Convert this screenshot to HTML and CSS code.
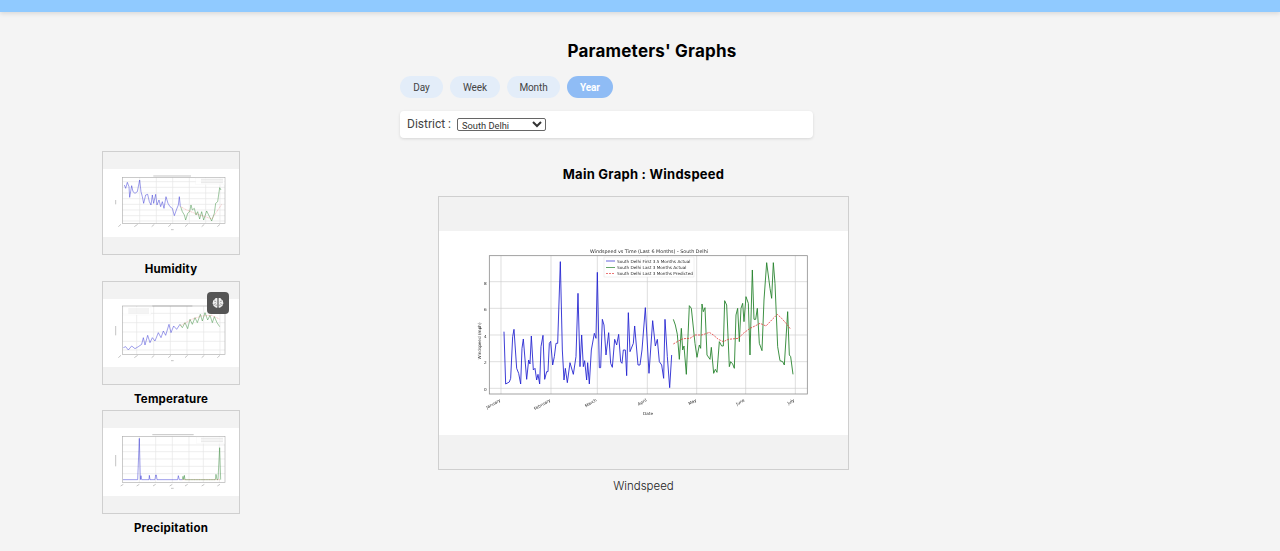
FILE: index.html
```html
<!DOCTYPE html>
<html lang="en">
<head>
<meta charset="utf-8">
<title>Parameters' Graphs</title>
<link rel="stylesheet" href="styles.css">
</head>
<body>
<header class="topbar"></header>
<div class="layout">
  <aside class="sidebar">
    <figure class="thumb">
      <div class="frame">
        <svg class="chart" width="136" height="68" viewBox="0 0 136 68">
          <rect class="paper" width="136" height="68"/>
          <g transform="translate(-8 -24) scale(.33333)">
            <path class="grid" d="M82 110H390M82 127H390M82 144H390M82 161H390M82 178H390M82 195H390M82 212H390M82 228H390M134 97V235M184 97V235M233 97V235M283 97V235M332 97V235M375 97V235"/>
            <rect class="axes" x="82" y="97" width="308" height="138"/>
            <rect class="legend" x="302" y="99" width="86" height="20"/>
            <path class="legendtxt" d="M318 103H384M318 108H384M318 113H384"/>
            <polyline class="blue thin" points="88,120 92,130 97,112 102,125 104,157 110,122 114,140 120,145 127,140 134,105 138,140 142,155 146,175 152,150 158,148 163,170 168,180 172,150 176,175 182,148 186,180 192,165 197,185 202,170 207,190 213,155 219,175 225,185 232,190 238,212 244,195 250,180 253,155 256,185"/>
            <polyline class="green thin" points="257,185 262,200 268,210 272,225 278,205 284,200 288,180 292,195 298,190 303,210 308,200 314,222 320,200 326,225 335,198 342,212 350,228 358,205 362,175 368,170 374,128 378,135"/>
            <polyline class="red thin" points="257,185 275,195 300,205 330,215 350,222 362,205 380,178"/>
            <path class="legendtxt dark" d="M175 93H288M78 238L70 245M128 238L118 245M178 238L170 245M228 238L220 245M278 238L270 245M328 238L320 245M375 238L367 245M228 254H236M62 165V178"/>
          </g>
        </svg>
      </div>
      <figcaption class="thumb-label">Humidity</figcaption>
    </figure>
    <figure class="thumb">
      <div class="frame">
        <svg class="chart" width="136" height="68" viewBox="0 0 136 68">
          <rect class="paper" width="136" height="68"/>
          <g transform="translate(-8 -23) scale(.33333)">
            <path class="grid" d="M82 112H390M82 140H390M82 168H390M82 196H390M82 222H390M125 90V235M176 90V235M226 90V235M276 90V235M326 90V235M375 90V235"/>
            <rect class="axes" x="82" y="90" width="308" height="145"/>
            <rect class="legend" x="84" y="93" width="84" height="24"/>
            <path class="legendtxt" d="M100 99H162M100 105H162M100 111H162"/>
            <polyline class="blue thin" points="85,215 92,212 100,222 110,210 120,218 130,212 140,205 145,185 150,207 158,178 165,200 172,185 180,195 190,170 198,185 205,165 212,178 222,145 228,170 236,150 245,160 255,145"/>
            <polyline class="green thin" points="255,145 262,155 270,140 278,158 285,130 292,145 300,125 307,140 316,115 322,135 330,110 338,132 345,118 352,140 358,122 366,140 374,152"/>
            <polyline class="red thin" points="255,150 290,130 320,120 350,118 375,130"/>
            <path class="legendtxt dark" d="M172 90H292M78 238L70 245M128 238L118 245M178 238L170 245M228 238L220 245M278 238L270 245M328 238L320 245M375 238L367 245M228 254H236M62 150V178"/>
          </g>
        </svg>
        <span class="badge">
          <svg width="12" height="12" viewBox="0 0 12 12">
            <path class="brain" d="M5.400 1.200C3.800.800 2.800 1.600 2.600 2.600 1.400 3 .800 4 1 5 .400 5.800.500 7 1.200 7.600 1.100 8.800 2 9.800 3 9.800 3.400 10.800 4.600 11 5.400 10.600ZM6.600 1.200C8.200.800 9.200 1.600 9.400 2.600 10.600 3 11.200 4 11 5 11.600 5.800 11.500 7 10.800 7.600 10.900 8.800 10 9.800 9 9.800 8.600 10.800 7.400 11 6.600 10.600Z"/>
            <path class="brain-groove" d="M2.200 4.200C3.200 4 4 4.400 4.200 5.200M1.600 7.400C2.800 7.400 3.600 7 4 6.400M3.800 9C3.800 8.400 4.200 8 4.800 7.900M9.800 4.200C8.800 4 8 4.400 7.800 5.200M10.400 7.400C9.200 7.400 8.400 7 8 6.400M8.200 9C8.200 8.400 7.800 8 7.200 7.900"/>
          </svg>
        </span>
      </div>
      <figcaption class="thumb-label">Temperature</figcaption>
    </figure>
    <figure class="thumb">
      <div class="frame">
        <svg class="chart" width="136" height="68" viewBox="0 0 136 68">
          <rect class="paper" width="136" height="68"/>
          <g transform="translate(-8 -23) scale(.33333)">
            <path class="grid" d="M82 120H390M82 140H390M82 162H390M82 184H390M82 206H390M133 94V232M182 94V232M232 94V232M282 94V232M325 94V232M373 94V232"/>
            <rect class="axes" x="82" y="94" width="308" height="138"/>
            <rect class="legend" x="304" y="96" width="84" height="20"/>
            <path class="legendtxt" d="M318 100H384M318 105H384M318 110H384"/>
            <polyline class="blue thin" points="84,224 128,224 133,100 136,224 138,212 140,224 162,224 163,211 165,224 180,224 182,210 184,210 186,224 248,224 250,212 253,224 262,224"/>
            <polyline class="green thin" points="262,224 264,214 266,224 268,211 270,224 361,224 363,208 366,224 369,224 374,128 377,224"/>
            <polyline class="red thin" points="262,224 376,224"/>
            <path class="legendtxt dark" d="M172 89H296M85 238L77 243M133 238L125 243M182 238L174 243M232 238L224 243M278 238L270 243M328 238L320 243M375 238L367 243M228 250H236M62 150V184"/>
          </g>
        </svg>
      </div>
      <figcaption class="thumb-label">Precipitation</figcaption>
    </figure>
  </aside>

  <main class="content">
    <h1 class="title">Parameters' Graphs</h1>
    <div class="tabs">
      <button class="tab tab-day">Day</button>
      <button class="tab tab-week">Week</button>
      <button class="tab tab-month">Month</button>
      <button class="tab tab-year active">Year</button>
    </div>
    <div class="filter">
      <label class="filter-label" for="district">District :</label>
      <select class="filter-select" id="district">
        <option>South Delhi</option>
      </select>
    </div>
    <section class="main-graph">
      <h2 class="subtitle">Main Graph : Windspeed</h2>
      <div class="frame frame-main">
        <svg class="chart" width="409" height="204" viewBox="0 0 409 204">
          <rect class="paper" width="409" height="204"/>
          <g transform="translate(31 9) scale(.33333)">
            <path class="grid" d="M58 125H1012M58 205H1012M58 285H1012M58 365H1012M58 445H1012M93 47V462M243 47V462M382 47V462M532 47V462M680 47V462M827 47V462M976 47V462"/>
            <rect class="axes" x="58" y="47" width="954" height="415"/>
            <polyline class="blue" points="102,275 107,432 118,426 122,415 128,290 132,268 140,385 146,400 152,432 156,325 160,297 170,418 176,360 180,372 184,288 190,390 195,385 200,420 204,403 209,432 213,320 219,286 224,418 230,395 234,395 238,310 242,304 248,375 253,350 258,310 263,310 271,65 277,330 282,420 286,385 292,428 300,368 310,403 318,350 324,160 330,380 335,285 340,380 344,362 350,420 353,368 358,432 364,330 373,280 378,295 382,97 388,383 392,383 397,238 402,255 408,345 416,278 422,370 427,382 434,298 440,315 446,283 452,365 456,370 460,330 466,330 470,407 475,218 480,335 490,310 494,258 504,375 510,375 516,330 526,203 537,400 548,242 556,318 562,298 568,365 575,375 581,415 585,238 592,350 599,443 605,345"/>
            <g transform="translate(510 0)">
              <polyline class="green" points="100,238 106,255 112,283 118,358 124,265 128,330 132,318 139,403 148,197 154,205 165,310 171,352 178,315 182,325 186,192 190,215 195,203 201,345 210,358 214,322 221,400 226,388 231,397 238,305 245,318 250,318 254,182 260,195 268,380 272,365 278,372 283,385 288,225 293,205 298,305 303,205 308,190 312,245 318,170 325,190 330,345 337,90 342,238 347,238 352,205 358,310 366,332 372,180 380,68 390,145 395,175 400,68 405,130 413,320 420,362 428,365 433,375 443,215 448,345 452,350 459,403"/>
              <polyline class="red" points="100,312 115,303 130,296 150,295 165,285 185,285 195,282 208,277 220,285 235,298 250,305 265,298 295,295 310,280 330,265 345,258 360,250 378,258 395,240 412,223 425,235 440,252 452,268"/>
            </g>
          </g>
          <rect class="legend" x="165" y="26" width="90" height="20"/>
          <line class="blue" x1="167" y1="30" x2="176" y2="30"/>
          <line class="green" x1="167" y1="36.500" x2="176" y2="36.500"/>
          <line class="red" x1="167" y1="42.500" x2="176" y2="42.500"/>
          <text class="tick" x="178" y="31.500">South Delhi First 3.5 Months Actual</text>
          <text class="tick" x="178" y="37.800">South Delhi Last 3 Months Actual</text>
          <text class="tick" x="178" y="44">South Delhi Last 3 Months Predicted</text>
          <text class="chart-title" x="210" y="21.500" text-anchor="middle">Windspeed vs Time (Last 6 Months) - South Delhi</text>
          <text class="tick" x="45" y="53.500">8</text>
          <text class="tick" x="45" y="80">6</text>
          <text class="tick" x="45" y="106.500">4</text>
          <text class="tick" x="45" y="133">2</text>
          <text class="tick" x="45" y="159.500">0</text>
          <text class="tick" text-anchor="middle" transform="translate(42 110) rotate(-90)">Windspeed (mph)</text>
          <text class="tick" text-anchor="end" transform="translate(62 170) rotate(-30)">January</text>
          <text class="tick" text-anchor="end" transform="translate(112 170) rotate(-30)">February</text>
          <text class="tick" text-anchor="end" transform="translate(158 170) rotate(-30)">March</text>
          <text class="tick" text-anchor="end" transform="translate(208 170) rotate(-30)">April</text>
          <text class="tick" text-anchor="end" transform="translate(258 170) rotate(-30)">May</text>
          <text class="tick" text-anchor="end" transform="translate(306 170) rotate(-30)">June</text>
          <text class="tick" text-anchor="end" transform="translate(356 170) rotate(-30)">July</text>
          <text class="tick" x="209" y="184" text-anchor="middle">Date</text>
        </svg>
      </div>
      <p class="caption">Windspeed</p>
    </section>
  </main>
</div>
</body>
</html>
```

FILE: styles.css
```css
* {
  box-sizing: border-box;
}

html,
body {
  margin: 0;
  height: 551px;
  overflow: hidden;
}

body {
  background: #f4f4f4;
  color: #000;
  font-family: Inter, "Liberation Sans", sans-serif;
}

.topbar {
  height: 12px;
  background: #90caff;
  box-shadow: 0 2px 4px rgba(0, 0, 0, 0.1);
}

.layout {
  display: flex;
  padding-left: 102px;
}

.sidebar {
  width: 138px;
  margin-top: 139px;
  margin-right: 160px;
  display: flex;
  flex-direction: column;
}

.thumb {
  margin: 0;
  height: 129.5px;
}

.frame {
  position: relative;
  width: 138px;
  height: 104px;
  display: flex;
  align-items: center;
  justify-content: center;
  background: #f2f2f2;
  border: 1px solid #cfcfcf;
}

.frame-main {
  width: 411px;
  height: 274px;
}

.chart {
  display: block;
  filter: blur(0.3px);
}

.thumb .chart {
  filter: blur(0.4px);
}

.paper {
  fill: #fff;
}

.grid {
  fill: none;
  stroke: #cfcfcf;
  stroke-width: 2;
}

.thumb .grid {
  stroke: #e6e6e6;
}

.axes {
  fill: none;
  stroke: #8c8c8c;
  stroke-width: 2.4;
}

.thumb .axes {
  stroke: #b0b0b0;
  stroke-width: 2;
}

.legend {
  fill: #fff;
  fill-opacity: 0.85;
  stroke: #e4e4e4;
  stroke-width: 0.5;
}

.legendtxt {
  fill: none;
  stroke: #d0d0d0;
  stroke-width: 1.5;
}

.legendtxt.dark {
  stroke: #8a8a8a;
}

.blue,
.green,
.red {
  fill: none;
  stroke-linejoin: round;
}

.blue {
  stroke: #2222d0;
  stroke-width: 3;
  stroke-opacity: 0.88;
}

.green {
  stroke: #24812a;
  stroke-width: 3;
  stroke-opacity: 0.88;
}

.red {
  stroke: #e23a3a;
  stroke-width: 2.4;
  stroke-dasharray: 6 3;
}

line.blue,
line.green {
  stroke-width: 0.8;
}

line.red {
  stroke-width: 0.7;
  stroke-dasharray: 2 1;
}

.thin {
  stroke-width: 2.2;
  stroke-opacity: 0.6;
}

.red.thin {
  stroke-width: 1.4;
  stroke-dasharray: 3 2;
}

.tick,
.chart-title {
  font-family: "DejaVu Sans", sans-serif;
  fill: #2a2a2a;
}

.tick {
  font-size: 4.200px;
}

.chart-title {
  font-size: 4.800px;
}

.badge {
  position: absolute;
  top: 10px;
  right: 10px;
  width: 22px;
  height: 22px;
  display: flex;
  align-items: center;
  justify-content: center;
  background: #555;
  border-radius: 4px;
}

.brain {
  fill: #f0f0f0;
}

.brain-groove {
  fill: none;
  stroke: #777;
  stroke-width: 0.7;
}

.thumb-label {
  margin-top: 6px;
  text-align: center;
  font-size: 11.500px;
  font-weight: 700;
  line-height: 16px;
  letter-spacing: 0.2px;
}

.content {
  width: 504px;
}

.title {
  margin: 30px 0 0;
  text-align: center;
  font-size: 17px;
  font-weight: 700;
  line-height: 18px;
  letter-spacing: 0.2px;
}

.tabs {
  display: flex;
  gap: 7px;
  margin-top: 16px;
}

.tab {
  height: 22px;
  padding: 0;
  border: 0;
  border-radius: 11px;
  background: #e3edf9;
  color: #444;
  font-family: Roboto, sans-serif;
  font-size: 10px;
  letter-spacing: -0.1px;
}

.tab-day {
  width: 43px;
}

.tab-week {
  width: 50px;
}

.tab-month {
  width: 53px;
}

.tab-year {
  width: 46px;
}

.tab.active {
  background: #8fbcf5;
  color: #fff;
  font-weight: 700;
}

.filter {
  width: 413px;
  height: 27px;
  margin-top: 13px;
  padding-left: 7px;
  display: flex;
  align-items: center;
  gap: 6px;
  background: #fff;
  border-radius: 4px;
  box-shadow: 0 1px 3px rgba(0, 0, 0, 0.12);
}

.filter-label {
  font-family: Roboto, sans-serif;
  font-size: 12px;
  color: #444;
  position: relative;
  top: -1px;
}

.filter-select {
  width: 89px;
  height: 13px;
  padding: 0;
  font-family: Roboto, sans-serif;
  font-size: 9.300px;
  background: #fff;
  border: 1px solid #666;
  border-radius: 2px;
  color: #333;
}

.main-graph {
  width: 411px;
  margin-left: 38px;
}

.subtitle {
  margin: 28px 0 14px;
  text-align: center;
  font-size: 13px;
  font-weight: 700;
  line-height: 16px;
  letter-spacing: 0.25px;
}

.caption {
  margin: 8px 0 0;
  text-align: center;
  font-size: 11.500px;
  font-weight: 300;
  line-height: 16px;
  color: #222;
}
```
